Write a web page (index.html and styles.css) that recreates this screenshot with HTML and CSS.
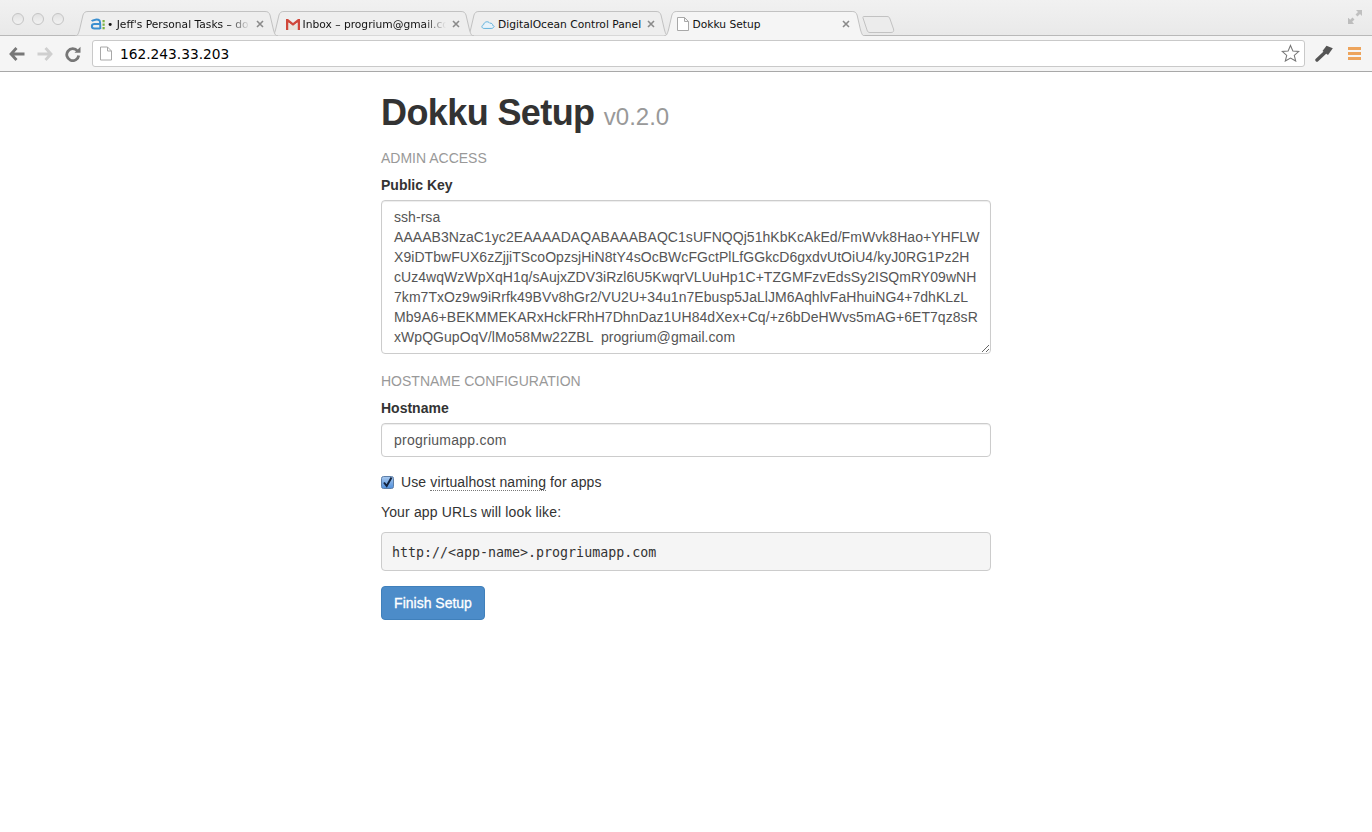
FILE: index.html
```html
<!DOCTYPE html>
<html lang="en">
<head>
<meta charset="utf-8">
<title>Dokku Setup</title>
<link rel="stylesheet" href="styles.css">
</head>
<body>
<header class="browser">
  <div class="tabstrip">
    <div class="lights"><span class="light"></span><span class="light"></span><span class="light"></span></div>
    <div class="tabs">
      <div class="tab tab-1">
        <svg class="tab-shape" viewBox="0 0 203 25" preserveAspectRatio="none"><path class="tab-fill" d="M0 25C3 25 3.500 22 4.500 19L8 4C9 1.500 10 .5 13 .5H190C193 .5 194 1.500 195 4L198.500 19C199.500 22 200 25 203 25Z"/></svg>
        <svg class="fav fav-a" viewBox="0 0 16 14" width="16" height="14"><path d="M1.700 4.200C3 2.500 8 2 9.500 3.500C10.300 4.300 10.300 5.500 10.300 12M10.300 7H4.500C1 7 1 11.600 4.500 11.600H10.300" fill="none" stroke="#3b8fd0" stroke-width="2"/><rect x="12.500" y="3" width="2.200" height="2.300" fill="#7cb342"/><rect x="12.500" y="6.500" width="2.200" height="2.300" fill="#7cb342"/><rect x="12.500" y="10" width="2.200" height="2.300" fill="#7cb342"/></svg>
        <span class="title fade">• Jeff's Personal Tasks – do</span>
        <svg class="close" viewBox="0 0 8 8" width="8" height="8"><path d="M1 1L7 7M7 1L1 7"/></svg>
      </div>
      <div class="tab tab-2">
        <svg class="tab-shape" viewBox="0 0 203 25" preserveAspectRatio="none"><path class="tab-fill" d="M0 25C3 25 3.500 22 4.500 19L8 4C9 1.500 10 .5 13 .5H190C193 .5 194 1.500 195 4L198.500 19C199.500 22 200 25 203 25Z"/></svg>
        <svg class="fav" viewBox="0 0 14 12" width="14" height="12"><path d="M0 1H2L7 5L12 1H14V12H11.500V4.500L7 8L2.500 4.500V12H0Z" fill="#d0473a"/><path d="M2.500 4.500L7 8L11.500 4.500V12H2.500Z" fill="#e8e4dc"/></svg>
        <span class="title fade">Inbox – progrium@gmail.com</span>
        <svg class="close" viewBox="0 0 8 8" width="8" height="8"><path d="M1 1L7 7M7 1L1 7"/></svg>
      </div>
      <div class="tab tab-3">
        <svg class="tab-shape" viewBox="0 0 203 25" preserveAspectRatio="none"><path class="tab-fill" d="M0 25C3 25 3.500 22 4.500 19L8 4C9 1.500 10 .5 13 .5H190C193 .5 194 1.500 195 4L198.500 19C199.500 22 200 25 203 25Z"/></svg>
        <svg class="fav" viewBox="0 0 16 12" width="14" height="11"><path d="M3.500 10.500C.5 10.500 .2 6.800 3 6.300C3.200 3 8 1.500 10 4.500C12 4 13.500 5.500 13.300 7C15 7.500 15 8 15 8.500C14 10 13 10.500 11.500 10.500Z" fill="#e8f3fa" stroke="#62b1dc" stroke-width="1.100"/></svg>
        <span class="title">DigitalOcean Control Panel</span>
        <svg class="close" viewBox="0 0 8 8" width="8" height="8"><path d="M1 1L7 7M7 1L1 7"/></svg>
      </div>
      <div class="tab tab-4 active">
        <svg class="tab-shape" viewBox="0 0 203 25" preserveAspectRatio="none"><path class="tab-fill" d="M0 25C3 25 3.500 22 4.500 19L8 4C9 1.500 10 .5 13 .5H190C193 .5 194 1.500 195 4L198.500 19C199.500 22 200 25 203 25"/></svg>
        <svg class="fav" viewBox="0 0 12 14" width="12" height="14"><path class="page" d="M.5 .5H7.500L11.500 4.500V13.500H.5ZM7.500 .5V4.500H11.500"/></svg>
        <span class="title">Dokku Setup</span>
        <svg class="close" viewBox="0 0 8 8" width="8" height="8"><path d="M1 1L7 7M7 1L1 7"/></svg>
      </div>
      <svg class="newtab" viewBox="0 0 33 17" width="33" height="17"><path d="M1.500 .5H25C27 .5 27.500 1.500 28 3L31.500 13C32 15 31.500 16.500 29 16.500H8C6 16.500 5.500 15.500 5 14L1 2C.8 1 1 .5 1.500 .5Z"/></svg>
    </div>
    <svg class="fullscreen" viewBox="0 0 14 14" width="14" height="14"><path d="M8 0H14V6L12 4L9.500 6.500L7.500 4.500L10 2Z" fill="#c0c0c0"/><path d="M0 14V8H0.500L2.200 9.700L4.500 7.500L6.500 9.500L4.200 11.800L6 14Z" fill="#bdbdbd"/></svg>
  </div>
  <div class="toolbar">
    <svg class="nav back" viewBox="0 0 16 14" width="16" height="14"><path d="M7.500 1L2 7L7.500 13M2.500 7H15.500" fill="none" stroke="#777" stroke-width="2.800"/></svg>
    <svg class="nav forward" viewBox="0 0 16 14" width="16" height="14"><path d="M8.500 1L14 7L8.500 13M13.500 7H.5" fill="none" stroke="#cfcfcf" stroke-width="2.800"/></svg>
    <svg class="nav reload" viewBox="0 0 16 16" width="16" height="16"><path d="M12.500 5A6 6 0 1 0 13.700 9.500" fill="none" stroke="#777" stroke-width="2.800"/><path d="M9.500 6.800H15.500V.8Z" fill="#777"/></svg>
    <div class="omnibox">
      <svg class="url-page" viewBox="0 0 12 14" width="12" height="15"><path class="page" d="M.5 .5H7.500L11.500 4.500V13.500H.5ZM7.500 .5V4.500H11.500"/></svg>
      <span class="url">162.243.33.203</span>
      <svg class="star" viewBox="0 0 20 19" width="19" height="18"><path d="M10 1.500L12.500 7.300L18.800 7.800L14 12L15.500 18L10 14.800L4.500 18L6 12L1.200 7.800L7.500 7.300Z" fill="#fff" stroke="#777" stroke-width="1.100"/></svg>
    </div>
    <svg class="tool-key" viewBox="0 0 18 17" width="18" height="17"><path d="M10 7.500L2 15" stroke="#555" stroke-width="3.400" stroke-linecap="round" fill="none"/><path d="M7.500 6L11.500 .8L17.800 3.300L13 10Z" fill="#555"/></svg>
    <div class="menu"><span></span><span></span><span></span></div>
  </div>
</header>
<main class="page-main">
  <h1 class="page-title">Dokku Setup <small class="version">v0.2.0</small></h1>
  <h2 class="section">ADMIN ACCESS</h2>
  <label class="field-label" for="key">Public Key</label>
  <textarea class="field key" id="key" wrap="off" spellcheck="false">ssh-rsa
AAAAB3NzaC1yc2EAAAADAQABAAABAQC1sUFNQQj51hKbKcAkEd/FmWvk8Hao+YHFLW
X9iDTbwFUX6zZjjiTScoOpzsjHiN8tY4sOcBWcFGctPlLfGGkcD6gxdvUtOiU4/kyJ0RG1Pz2H
cUz4wqWzWpXqH1q/sAujxZDV3iRzl6U5KwqrVLUuHp1C+TZGMFzvEdsSy2ISQmRY09wNH
7km7TxOz9w9iRrfk49BVv8hGr2/VU2U+34u1n7Ebusp5JaLlJM6AqhlvFaHhuiNG4+7dhKLzL
Mb9A6+BEKMMEKARxHckFRhH7DhnDaz1UH84dXex+Cq/+z6bDeHWvs5mAG+6ET7qz8sR
xWpQGupOqV/lMo58Mw22ZBL progrium@gmail.com</textarea>
  <h2 class="section section-next">HOSTNAME CONFIGURATION</h2>
  <label class="field-label" for="host">Hostname</label>
  <input class="field host" id="host" type="text" value="progriumapp.com">
  <div class="check-row">
    <svg class="check" viewBox="0 0 13 13" width="13" height="13"><defs><linearGradient id="cb" x1="0" y1="0" x2="0" y2="1"><stop offset="0" stop-color="#a9c9ee"/><stop offset="1" stop-color="#4f8fdc"/></linearGradient></defs><rect x=".5" y=".5" width="12" height="12" rx="2" fill="url(#cb)" stroke="#5d7fa8"/><path d="M3 6.500L5.700 10L10.500 1.500" fill="none" stroke="#12233f" stroke-width="2"/></svg>
    <span>Use <span class="hint">virtualhost naming</span> for apps</span>
  </div>
  <p class="note">Your app URLs will look like:</p>
  <pre class="code">http://&lt;app-name&gt;.progriumapp.com</pre>
  <button class="finish" type="button">Finish Setup</button>
</main>
</body>
</html>
```
FILE: styles.css
```css
* { box-sizing: border-box; }
html, body { margin: 0; height: 100%; }
body { background: #fff; color: #333; font: 14px/20px "Liberation Sans", Arial, sans-serif; overflow: hidden; }

.browser { display: flex; flex-direction: column; }
.tabstrip { height: 36px; display: flex; align-items: flex-end; background: linear-gradient(#f1f1f1, #e9e9e9); border-bottom: 1px solid #b9b9b9; position: relative; }
.lights { display: flex; gap: 8px; padding-left: 12px; width: 75px; height: 33px; align-items: center; flex: none; align-self: flex-start; padding-top: 5px; }
.light { width: 12px; height: 12px; border-radius: 50%; border: 1px solid #c4c4c4; background: linear-gradient(#e2e2e2, #f2f2f2); }
.tabs { display: flex; align-items: flex-start; flex: 1; height: 25px; margin-bottom: -1px; }
.tab { position: relative; width: 203px; height: 25px; flex: none; margin-right: -7.500px; display: flex; align-items: center; padding: 1px 14px 0 15px; font: 10.700px/14px "DejaVu Sans", sans-serif; color: #111; }
.tab-1 { z-index: 4; }
.tab-2 { z-index: 3; }
.tab-3 { z-index: 2; }
.tab-4 { z-index: 5; width: 201px; margin-left: 2px; padding: 1px 15px 0 13px; }
.tab-shape { position: absolute; left: 0; top: 0; width: 100%; height: 100%; }
.tab-fill { fill: #eeeeee; stroke: #c2c2c2; stroke-width: 1; vector-effect: non-scaling-stroke; }
.active .tab-fill { fill: #f5f5f5; }
.fav { position: relative; flex: none; margin-right: 3px; }
.fav-a { margin-right: 1px; }
.page { fill: #fff; stroke: #a8a8a8; stroke-width: 1; }
.title { position: relative; flex: 1; overflow: hidden; white-space: nowrap; margin-top: 2px; }
.fade { -webkit-mask-image: linear-gradient(90deg, #000 85%, transparent 100%); mask-image: linear-gradient(90deg, #000 85%, transparent 100%); }
.tab-4 .fav { margin-right: 4px; }
.tab-3 .title { flex: none; }
.tab-3 .close { margin-left: auto; }
.close { position: relative; flex: none; margin-left: 6px; fill: none; stroke: #8a8a8a; stroke-width: 1.600; }
.newtab { flex: none; margin: 5px 0 0 5px; position: relative; z-index: 1; fill: #ececec; stroke: #c2c2c2; }
.fullscreen { position: absolute; right: 10px; top: 10px; }

.toolbar { height: 36px; display: flex; align-items: center; background: #f5f5f5; border-bottom: 1px solid #a8a8a8; padding: 0 0 0 9px; position: relative; }
.nav { flex: none; }
.forward { margin-left: 12px; }
.reload { margin: 0 11px 0 12px; }
.omnibox { flex: none; width: 1213px; height: 27px; display: flex; align-items: center; background: #fff; border: 1px solid #c9c9c9; border-radius: 3px; padding: 0 4px 0 7px; margin-top: -1px; }
.url { font: 13.750px/20px "DejaVu Sans", sans-serif; color: #000; margin: 1px 0 0 8px; flex: 1; }
.tool-key { flex: none; margin-left: 10px; }
.menu { flex: none; margin-left: 15px; width: 13px; display: flex; flex-direction: column; gap: 2px; }
.menu span { height: 3px; background: #eda45c; }

.page-main { width: 610px; margin: 0 auto; }
.page-title { margin: 21px 0 15px; font-size: 36px; line-height: 40px; font-weight: 700; color: #333; letter-spacing: -.6px; }
.version { font-size: 24px; line-height: 1; font-weight: 400; color: #999; letter-spacing: 0; }
.section { margin: 0 0 7px; font-size: 14px; line-height: 20px; font-weight: 400; color: #999; }
.section-next { margin-top: 17px; }
.field-label { display: block; font-weight: 700; margin-bottom: 5px; }
.field { display: block; width: 100%; border: 1px solid #ccc; border-radius: 4px; padding: 6px 12px; color: #555; background: #fff; font: 14px/20px "Liberation Sans", Arial, sans-serif; box-shadow: inset 0 1px 1px rgba(0,0,0,.075); outline: none; }
.key { height: 154px; resize: vertical; overflow: hidden; white-space: pre; letter-spacing: .05px; word-spacing: 4px; }
.host { height: 34px; letter-spacing: .25px; }
.check-row { display: flex; align-items: center; gap: 7px; margin-top: 15px; letter-spacing: .12px; }
.hint { border-bottom: 1px dotted #777; }
.note { margin: 10px 0; letter-spacing: .14px; }
.code { margin: 0 0 15px; height: 39px; padding: 10px 10px 8px; background: #f5f5f5; border: 1px solid #ccc; border-radius: 4px; color: #333; font: 13.300px/19px "DejaVu Sans Mono", monospace; }
.finish { display: block; height: 34px; width: 104px; padding: 0; border: 1px solid #4080bb; border-radius: 4px; background: #4c8cc9; color: #fff; font: 14px/20px "Liberation Sans", Arial, sans-serif; -webkit-text-stroke: .3px #fff; }
```
